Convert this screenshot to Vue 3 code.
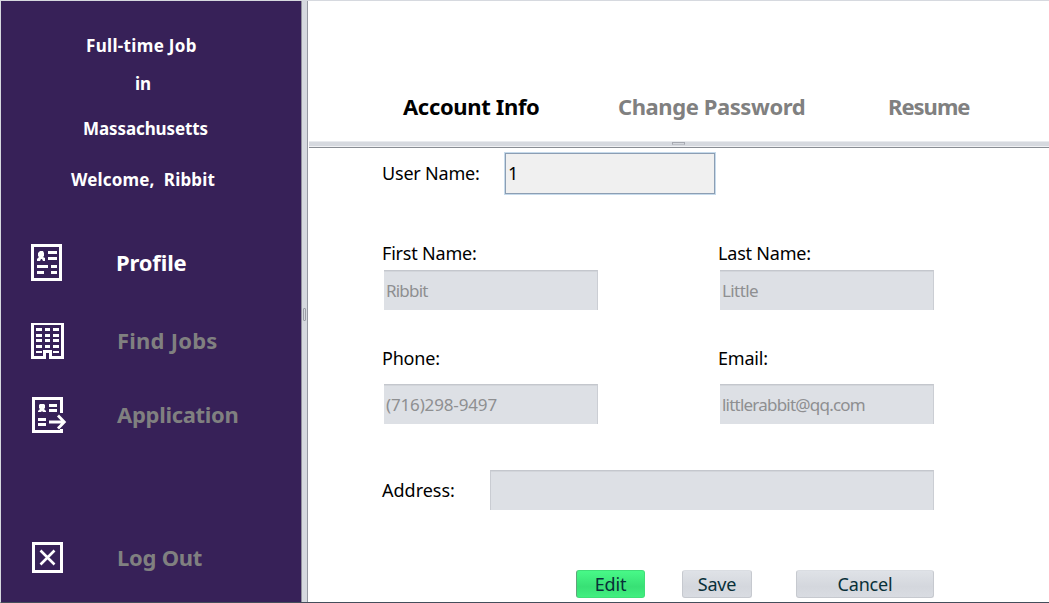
<script setup>
const intro = [
  { text: 'Full-time Job', cls: 'full' },
  { text: 'in', cls: 'in' },
  { text: 'Massachusetts', cls: 'state' },
  { text: 'Welcome,  Ribbit', cls: 'welcome' },
]
const rows = [
  {
    cls: 'names',
    cells: [
      { label: 'First Name:', value: 'Ribbit', cls: 'first' },
      { label: 'Last Name:', value: 'Little', cls: 'last' },
    ],
  },
  {
    cls: 'contact',
    cells: [
      { label: 'Phone:', value: '(716)298-9497', cls: 'phone' },
      { label: 'Email:', value: 'littlerabbit@qq.com', cls: 'email' },
    ],
  },
]
</script>

<template>
  <div class="window">
    <aside class="sidebar">
      <div class="intro">
        <p v-for="l in intro" :key="l.cls" :class="l.cls">{{ l.text }}</p>
      </div>
      <nav>
        <a class="item profile active">
          <svg width="32" height="37" viewBox="0 0 32 37">
            <rect x="1.5" y="1.5" width="28" height="34" fill="none" stroke="#fff" stroke-width="3" />
            <path fill="#fff" d="M9 7h3l1 2v3l-1 1 2 1v3h-2l-1-2h-1l-1 2H6v-2l2-2-1-1V9zM17 7h9v3h-9zM17 13h9v3h-9zM6 21h11v3H6zM20 21h6v3h-6zM6 27h7v3H6zM20 27h6v3h-6z" />
          </svg>
          <span>Profile</span>
        </a>
        <a class="item jobs">
          <svg width="33" height="36" viewBox="0 0 33 36">
            <path fill="#fff" fill-rule="evenodd" d="M0 0h33v36H18v-6h-3v6H0zM3 2v31h9v-6h9v6h9V2z" />
            <path fill="#fff" d="M5 5h6v3H5zM14 5h5v3h-5zM22 5h6v3h-6zM5 11h6v3H5zM14 11h5v3h-5zM22 11h6v3h-6zM5 16h6v3H5zM14 16h5v3h-5zM22 16h6v3h-6zM5 22h6v3H5zM14 22h5v3h-5zM22 22h6v3h-6zM5 28h6v2H5zM22 28h6v2h-6z" />
          </svg>
          <span>Find Jobs</span>
        </a>
        <a class="item application">
          <svg width="35" height="36" viewBox="0 0 35 36">
            <path fill="none" stroke="#fff" stroke-width="3" d="M29.500 16V1.500H1.500v33h28V32" />
            <path fill="#fff" d="M8 7h4l1 1v3l-1 1 2 2v1h-3l-1-1-1 1H6v-1l2-2-1-1V8zM17 7h8v3h-8zM17 12h8v3h-8zM6 21h8v3H6zM6 26h8v3H6z" />
            <path fill="none" stroke="#fff" stroke-width="2.800" d="M17 25h15M26 18.500l6.300 6.500L26 31.500" />
          </svg>
          <span>Application</span>
        </a>
        <a class="item logout">
          <svg width="31" height="31" viewBox="0 0 31 31">
            <rect x="1.500" y="1.500" width="28" height="28" fill="none" stroke="#fff" stroke-width="3" />
            <path fill="none" stroke="#fff" stroke-width="2.600" d="M8.500 8.500l14 14M22.500 8.500l-14 14" />
          </svg>
          <span>Log Out</span>
        </a>
      </nav>
    </aside>
    <div class="divider"><i></i></div>
    <main>
      <header>
        <a class="tab account">Account Info</a>
        <a class="tab password">Change Password</a>
        <a class="tab resume">Resume</a>
      </header>
      <div class="splitter"><i></i></div>
      <form @submit.prevent>
        <div class="user">
          <label>User Name:</label>
          <div class="username">1</div>
        </div>
        <div v-for="r in rows" :key="r.cls" class="pair" :class="r.cls">
          <div v-for="c in r.cells" :key="c.cls" class="cell">
            <label>{{ c.label }}</label>
            <div class="field" :class="c.cls">{{ c.value }}</div>
          </div>
        </div>
        <div class="address">
          <label>Address:</label>
          <div class="field"></div>
        </div>
        <div class="actions">
          <button class="edit">Edit</button>
          <button class="save">Save</button>
          <button class="cancel">Cancel</button>
        </div>
      </form>
    </main>
  </div>
</template>

<style>
body { margin: 0; overflow: hidden; }
</style>

<style scoped>
* { box-sizing: border-box; }
.window {
  display: flex;
  width: 1049px;
  height: 603px;
  border-top: 1px solid #d6d9df;
  border-left: 1px solid #d6d9df;
  border-bottom: 1px solid #444e5b;
  background: #fff;
  color: #000;
  font-family: "Noto Sans", "Open Sans", sans-serif;
}
.sidebar { width: 300px; background: #372158; flex: none; }
.intro { height: 243px; padding-top: 33px; color: #fff; }
.intro p { margin: 0; font-size: 17px; line-height: 24px; font-weight: 700; white-space: pre; }
.full { padding-left: 85px; letter-spacing: 0.33px; }
.intro .in { padding-left: 134px; margin-top: 14px; }
.intro .state { padding-left: 82px; margin-top: 21px; letter-spacing: -0.1px; }
.intro .welcome { padding-left: 70px; margin-top: 27px; letter-spacing: 0.17px; }
.item { display: flex; height: 37px; align-items: flex-start; padding-left: 30px; color: #808080; }
.item svg { flex: none; display: block; }
.item span { font-size: 22px; line-height: 36px; font-weight: 700; width: 160px; white-space: nowrap; }
.profile span { margin-left: 53px; letter-spacing: -0.15px; }
.jobs span { margin-left: 53px; line-height: 34px; letter-spacing: 0.22px; }
.application span { margin-left: 50px; line-height: 34px; letter-spacing: -0.3px; }
.logout span { margin-left: 54px; line-height: 31px; letter-spacing: -0.25px; }
.active { color: #fff; }
.jobs { margin-top: 42px; }
.application { margin-top: 37px; padding-left: 31px; }
.logout { margin-top: 108px; padding-left: 31px; }
.divider {
  width: 7px;
  flex: none;
  background: #d6d9df;
  border-left: 1px solid #92929f;
  border-right: 1px solid #9699a2;
  padding: 307px 0 0 1px;
}
.divider i { display: block; width: 3px; height: 13px; border: 1px solid #9b9ea6; border-radius: 1px; }
main { flex: 1; min-width: 0; }
header { display: flex; height: 140px; padding: 88px 0 0 95px; }
.tab { font-size: 22px; line-height: 34px; font-weight: 700; color: #808080; white-space: nowrap; letter-spacing: -0.42px; }
.account { width: 215px; color: #000; letter-spacing: -0.35px; }
.password { width: 270px; }
.tab.resume { letter-spacing: -1px; }
.splitter {
  height: 7px;
  margin-left: 1px;
  padding: 1px 0 0 363px;
  background: linear-gradient(#e8eaee 1px, #d6d9df 1px, #d6d9df 5px, #f0f1f4 5px, #f0f1f4 6px, #898d94 6px);
}
.splitter i { display: block; width: 13px; height: 3px; border: 1px solid #a5a8b0; border-bottom-color: #bec1c8; }
form { padding: 4px 0 0 74px; }
label { font-size: 18px; line-height: 24px; white-space: nowrap; display: block; letter-spacing: -0.2px; }
.user { display: flex; height: 43px; }
.user label { width: 122px; line-height: 42px; }
.username {
  width: 212px;
  height: 43px;
  border: 1px solid #c6daeb;
  outline: 1px solid #8c9eb3;
  outline-offset: -2px;
  background: #f0f0f0;
  padding-left: 3px;
  font-size: 18px;
  line-height: 41px;
}
.pair { display: flex; gap: 122px; }
.names { margin-top: 46px; }
.contact { margin-top: 36px; }
.names .cell { height: 69px; }
.contact .cell { height: 78px; }
.cell { width: 214px; display: flex; flex-direction: column; justify-content: space-between; }
.field {
  margin-left: 2px;
  width: 214px;
  height: 40px;
  flex: none;
  background: #dde0e5;
  border-top: 1px solid #c4c7cd;
  border-right: 1px solid #cbced4;
  box-shadow: inset 0 1px #d2d5da;
  padding-left: 2px;
  color: #8e8f91;
  font-size: 17px;
  line-height: 39px;
}
.first { letter-spacing: -0.8px; }
.last { letter-spacing: -0.6px; }
.phone { letter-spacing: -0.15px; }
.email { letter-spacing: -0.78px; }
.address { margin-top: 46px; display: flex; align-items: center; }
.address label { width: 106px; letter-spacing: 0; }
.address .field { width: 444px; border-left: 1px solid #c9ccd2; }
.actions { display: flex; margin: 60px 0 0 194px; }
button {
  height: 28px;
  padding: 0;
  border: 1px solid #c6c9cf;
  border-top-color: #dadde2;
  border-radius: 3px;
  background: linear-gradient(#dfe2e7, #d4d7dd 60%, #d9dce2);
  color: #083038;
  font: 18px/26px "Noto Sans", "Open Sans", sans-serif;
  letter-spacing: -0.2px;
}
.edit { width: 69px; border-color: #3fdf78; border-left-color: #62a37a; background: linear-gradient(#48f988, #38e075 60%, #41ef80); }
.save { width: 70px; margin-left: 37px; }
.cancel { width: 138px; margin-left: 44px; }
</style>
